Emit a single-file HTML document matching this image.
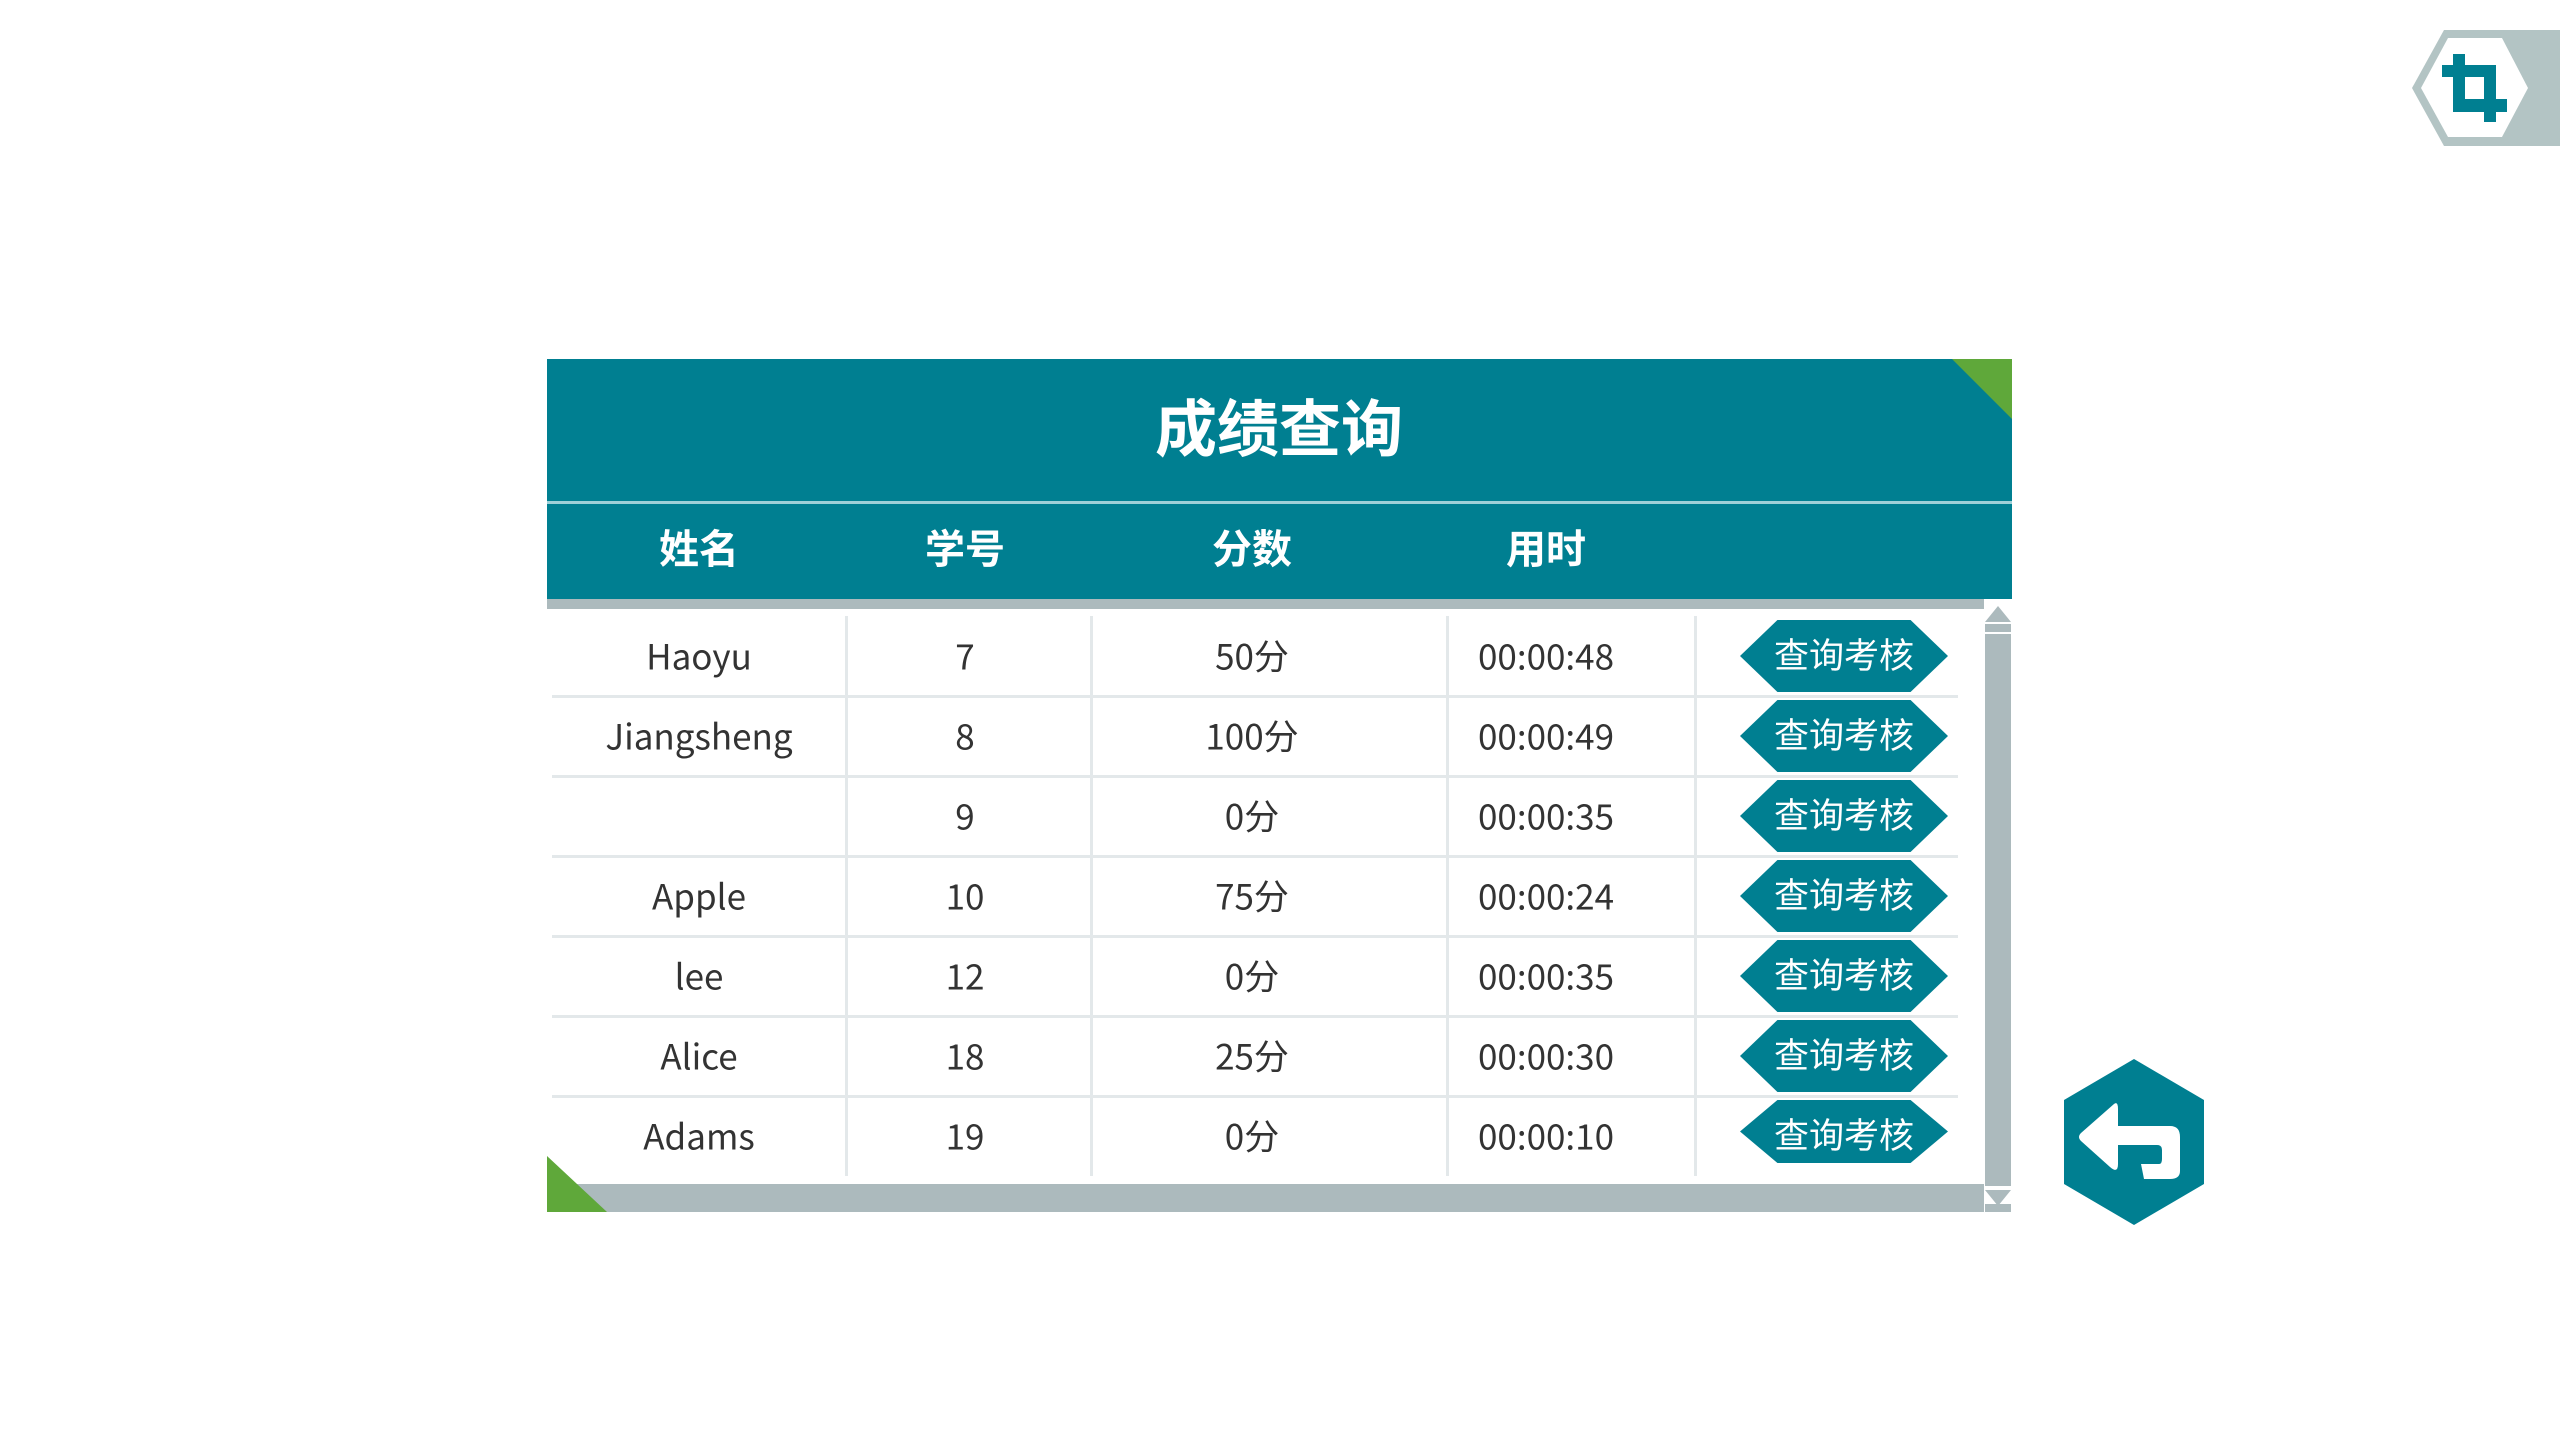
<!DOCTYPE html>
<html><head><meta charset="utf-8"><style>
body{margin:0;width:2560px;height:1440px;background:#fff;position:relative;overflow:hidden;font-family:"Noto Sans CJK SC","Liberation Sans",sans-serif;}
.a{position:absolute}
.t{position:absolute;text-align:center;transform:translate(-50%,-50%);white-space:nowrap}
.cell{font-size:35px;color:#333;margin-top:-2px}
.hd{font-size:40px;font-weight:bold;color:#fff;margin-top:-3px}
.btn{position:absolute;left:1740px;width:208px;height:72px;background:#007f91;clip-path:polygon(18% 0,82% 0,100% 50%,82% 100%,18% 100%,0 50%);color:#fff;font-size:35px;text-align:center;line-height:68px}
.rl{position:absolute;left:552px;width:1406px;height:3px;background:#e3e8ea}
.cl{position:absolute;top:616px;width:3px;height:560px;background:#e3e8ea}
</style></head><body>
<div class="a" style="left:547px;top:359px;width:1465px;height:142px;background:#007f91"></div>
<div class="a" style="left:547px;top:501px;width:1465px;height:3px;background:#9fd0d8"></div>
<div class="a" style="left:547px;top:504px;width:1465px;height:95px;background:#007f91"></div>
<div class="a" style="left:547px;top:599px;width:1437px;height:10px;background:#acbabd"></div>
<svg class="a" style="left:1952px;top:359px" width="60" height="60"><polygon points="0,0 60,0 60,60" fill="#5fa83a"/></svg>
<div class="t" style="left:1279px;top:424px;font-size:62px;font-weight:bold;color:#fff">成绩查询</div>
<div class="t hd" style="left:699px;top:549px">姓名</div>
<div class="t hd" style="left:965px;top:549px">学号</div>
<div class="t hd" style="left:1252px;top:549px">分数</div>
<div class="t hd" style="left:1546px;top:549px">用时</div>
<div class="cl" style="left:845px"></div><div class="cl" style="left:1090px"></div><div class="cl" style="left:1446px"></div><div class="cl" style="left:1694px"></div>
<div class="rl" style="top:695px"></div><div class="rl" style="top:775px"></div><div class="rl" style="top:855px"></div><div class="rl" style="top:935px"></div><div class="rl" style="top:1015px"></div><div class="rl" style="top:1095px"></div>
<div class="btn" style="top:620px">查询考核</div>
<div class="btn" style="top:700px">查询考核</div>
<div class="btn" style="top:780px">查询考核</div>
<div class="btn" style="top:860px">查询考核</div>
<div class="btn" style="top:940px">查询考核</div>
<div class="btn" style="top:1020px">查询考核</div>
<div class="btn" style="top:1100px;height:63px">查询考核</div>
<div class="t cell" style="left:699px;top:657px">Haoyu</div><div class="t cell" style="left:965px;top:657px">7</div><div class="t cell" style="left:1252px;top:657px">50分</div><div class="t cell" style="left:1546px;top:657px">00:00:48</div>
<div class="t cell" style="left:699px;top:737px">Jiangsheng</div><div class="t cell" style="left:965px;top:737px">8</div><div class="t cell" style="left:1252px;top:737px">100分</div><div class="t cell" style="left:1546px;top:737px">00:00:49</div>
<div class="t cell" style="left:965px;top:817px">9</div><div class="t cell" style="left:1252px;top:817px">0分</div><div class="t cell" style="left:1546px;top:817px">00:00:35</div>
<div class="t cell" style="left:699px;top:897px">Apple</div><div class="t cell" style="left:965px;top:897px">10</div><div class="t cell" style="left:1252px;top:897px">75分</div><div class="t cell" style="left:1546px;top:897px">00:00:24</div>
<div class="t cell" style="left:699px;top:977px">lee</div><div class="t cell" style="left:965px;top:977px">12</div><div class="t cell" style="left:1252px;top:977px">0分</div><div class="t cell" style="left:1546px;top:977px">00:00:35</div>
<div class="t cell" style="left:699px;top:1057px">Alice</div><div class="t cell" style="left:965px;top:1057px">18</div><div class="t cell" style="left:1252px;top:1057px">25分</div><div class="t cell" style="left:1546px;top:1057px">00:00:30</div>
<div class="t cell" style="left:699px;top:1137px">Adams</div><div class="t cell" style="left:965px;top:1137px">19</div><div class="t cell" style="left:1252px;top:1137px">0分</div><div class="t cell" style="left:1546px;top:1137px">00:00:10</div>
<div class="a" style="left:547px;top:1184px;width:1437px;height:28px;background:#acbabd"></div>
<svg class="a" style="left:547px;top:1156px" width="60" height="56"><polygon points="0,0 60,56 0,56" fill="#5fa83a"/></svg>
<svg class="a" style="left:1984px;top:604px" width="28" height="608">
<polygon points="14,2 27,18 1,18" fill="#acbabd"/><rect x="1" y="20" width="26" height="8" fill="#acbabd"/>
<rect x="1" y="30" width="26" height="552" fill="#acbabd"/>
<polygon points="1,586 27,586 14,602" fill="#acbabd"/><rect x="1" y="600" width="26" height="8" fill="#acbabd"/>
</svg>
<svg class="a" style="left:2064px;top:1059px" width="140" height="166">
<polygon points="70,0 140,41 140,125 70,166 0,125 0,41" fill="#007f91"/>
<path d="M50,45 Q54,42 54,50 L54,67 L106,67 Q116,67 116,78 L116,112 Q116,120 106,120 L80,120 L77,105 L95,105 Q98,105 98,100 L98,91 Q98,86 93,86 L54,86 L54,105 Q54,115 46,108 L17,82 Q13,78 17,74 Z" fill="#fff"/>
</svg>
<svg class="a" style="left:2400px;top:0" width="160" height="160">
<polygon points="44,30 160,30 160,146 44,146 12,88" fill="#b3c4c4"/>
<polygon points="48,38 102,38 128,88 102,137 48,137 21,88" fill="#fff"/>
<rect x="53" y="54" width="12" height="58" fill="#007f91"/>
<rect x="42" y="65" width="54" height="12" fill="#007f91"/>
<rect x="84" y="65" width="12" height="57" fill="#007f91"/>
<rect x="53" y="99" width="54" height="13" fill="#007f91"/>
</svg>
</body></html>
